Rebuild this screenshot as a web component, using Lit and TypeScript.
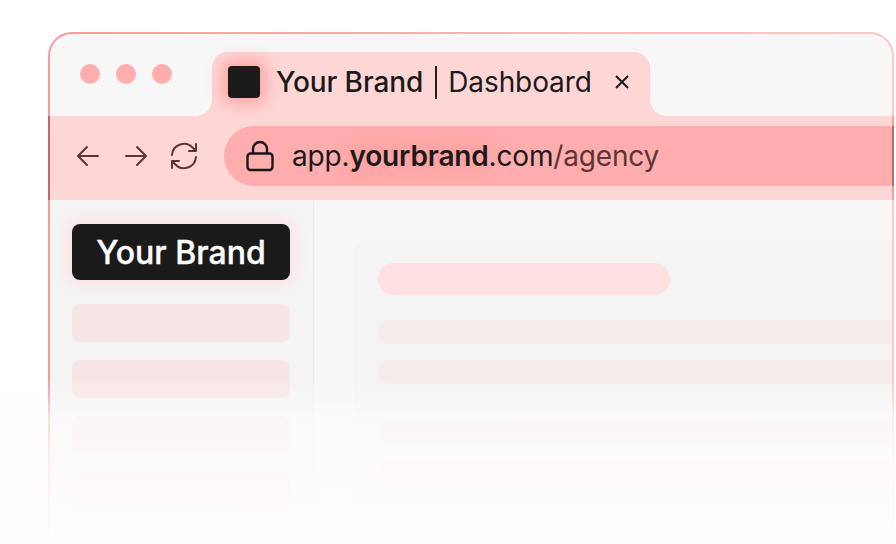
import { LitElement, html, css } from "lit";
import { customElement } from "lit/decorators.js";

@customElement("app-root")
export class AppRoot extends LitElement {
  static styles = css`
    :host {
      display: block;
      position: relative;
      width: 896px;
      height: 544px;
      overflow: hidden;
      background: #fff;
      font-family: Inter, "Liberation Sans", sans-serif;
      color: #1a1a1a;
      box-sizing: border-box;
      padding: 32px 0 0 48px;
    }
    .window {
      width: 846px;
      height: 560px;
      box-sizing: border-box;
      padding: 2px 2px 0;
      border-radius: 24px 24px 0 0;
      background: linear-gradient(90deg, #f59b9b, #ffc9c9);
      display: flex;
      flex-direction: column;
    }
    .titlebar {
      height: 82px;
      flex: none;
      display: flex;
      align-items: flex-start;
      padding-left: 30px;
      box-sizing: border-box;
      background: #f7f7f7;
      border-radius: 22px 22px 0 0;
    }
    .dots {
      display: flex;
      gap: 16px;
      margin-top: 30px;
    }
    .dots span {
      width: 20px;
      height: 20px;
      border-radius: 50%;
      background: #ffadad;
    }
    .tab {
      position: relative;
      margin: 18px 0 0 40px;
      width: 438px;
      height: 64px;
      box-sizing: border-box;
      padding: 14px 0 0 16px;
      background: #ffd6d6;
      border-radius: 16px 16px 0 0;
      display: flex;
      align-items: flex-start;
      font-size: 28px;
      line-height: 32px;
      letter-spacing: -0.1px;
      white-space: nowrap;
    }
    .tab::before,
    .tab::after {
      content: "";
      position: absolute;
      bottom: 0;
      width: 16px;
      height: 16px;
    }
    .tab::before {
      left: -16px;
      background: radial-gradient(circle at 0 0, transparent 15.5px, #ffd6d6 16px);
    }
    .tab::after {
      right: -16px;
      background: radial-gradient(circle at 100% 0, transparent 15.5px, #ffd6d6 16px);
    }
    .favicon {
      width: 32px;
      height: 32px;
      flex: none;
      border-radius: 4px;
      background: #1a1a1a;
      box-shadow: 0 0 16px 6px #ffa3a3;
      margin-right: 16px;
    }
    .brand {
      font-weight: 500;
    }
    .divider {
      width: 2px;
      height: 33px;
      background: #2a1a1a;
      margin: 0 11px 0 12px;
      flex: none;
    }
    .close {
      width: 16px;
      height: 16px;
      margin: 8px 0 0 22px;
      flex: none;
    }
    .toolbar {
      height: 84px;
      flex: none;
      margin: 0 -2px;
      padding-bottom: 4px;
      display: flex;
      align-items: center;
      box-sizing: border-box;
      background: linear-gradient(to left, #ff9a9a 2px, #ffd6d6 2px);
      border-left: 2px solid #c06a6a;
    }
    .nav {
      display: flex;
      align-items: center;
      margin-left: 26px;
      flex: none;
    }
    .nav svg {
      display: block;
      color: #5c3535;
    }
    .arrow {
      width: 24px;
      height: 24px;
    }
    .arrow + .arrow {
      margin-left: 24px;
    }
    .reload {
      width: 28px;
      height: 28px;
      margin-left: 22px;
    }
    .address {
      margin-left: 26px;
      flex: 1;
      height: 60px;
      box-sizing: border-box;
      background: #ffadad;
      border-radius: 30px 0 0 30px;
      border-right: 2px solid #b07070;
      display: flex;
      align-items: center;
      padding-left: 20px;
      font-size: 28px;
      letter-spacing: -0.006em;
      white-space: nowrap;
    }
    .lock {
      width: 32px;
      height: 32px;
      margin-right: 16px;
      flex: none;
      color: #1f1518;
    }
    .address b {
      font-weight: 600;
      text-shadow: 0 0 20px #ff8a8a;
    }
    .path {
      color: #5c3535;
    }
    .body {
      flex: 1;
      display: flex;
      min-height: 0;
      background: #f7f7f7;
    }
    .sidebar {
      width: 264px;
      flex: none;
      box-sizing: border-box;
      padding: 24px 23px 0 22px;
      background: #f4f4f4;
      border-right: 1px solid #f5eaea;
      display: flex;
      flex-direction: column;
      gap: 18px;
    }
    .logo {
      height: 56px;
      margin-bottom: 6px;
      border-radius: 8px;
      background: #1a1a1a;
      color: #fff;
      font-size: 32px;
      font-weight: 500;
      -webkit-text-stroke: 0.4px #fff;
      line-height: 58px;
      text-align: center;
      box-shadow: 0 0 16px 3px #ffdede;
    }
    .nav-item {
      height: 38px;
      border-radius: 8px;
      background: #f8e6e6;
      flex: none;
    }
    .main {
      flex: 1;
      min-width: 0;
      padding: 40px 0 0 40px;
    }
    .card {
      height: 300px;
      border-radius: 12px 0 0 12px;
      background: #f4f4f4;
      padding: 23px 0 0 24px;
      display: flex;
      flex-direction: column;
      gap: 16px;
    }
    .heading {
      width: 292px;
      height: 32px;
      border-radius: 16px;
      background: #ffe1e1;
      margin-bottom: 9px;
    }
    .line {
      height: 24px;
      border-radius: 12px 0 0 12px;
      background: #f6ecea;
      flex: none;
    }
    .line.gap {
      margin-top: 20px;
    }
    .fade {
      position: absolute;
      left: 0;
      right: 0;
      top: 380px;
      bottom: 0;
      background: linear-gradient(
        to bottom,
        rgba(255, 252, 252, 0) 0%,
        rgba(255, 252, 252, 0.68) 24%,
        rgba(255, 252, 252, 0.84) 50%,
        rgba(255, 252, 252, 0.95) 80%,
        #fffdfd 100%
      );
    }
  `;

  render() {
    return html`
      <div class="window">
        <div class="titlebar">
          <div class="dots"><span></span><span></span><span></span></div>
          <div class="tab">
            <div class="favicon"></div>
            <span class="brand">Your Brand</span>
            <div class="divider"></div>
            <span>Dashboard</span>
            <svg class="close" viewBox="0 0 16 16" fill="none" stroke="#1a1a1a" stroke-width="2">
              <path d="M2 2l12 12M14 2L2 14" />
            </svg>
          </div>
        </div>
        <div class="toolbar">
          <div class="nav">
            <svg class="arrow" viewBox="0 0 24 24" fill="none" stroke="currentColor" stroke-width="2" stroke-linecap="round" stroke-linejoin="round">
              <path d="M22 12H2M11 3l-9 9 9 9" />
            </svg>
            <svg class="arrow" viewBox="0 0 24 24" fill="none" stroke="currentColor" stroke-width="2" stroke-linecap="round" stroke-linejoin="round">
              <path d="M2 12h20M13 3l9 9-9 9" />
            </svg>
            <svg class="reload" viewBox="0 0 28 28" fill="none" stroke="currentColor" stroke-width="2" stroke-linecap="round" stroke-linejoin="round">
              <path d="M2 13a12 12 0 0 1 21-7l3 3M26 2v7h-7" />
              <path d="M26 15a12 12 0 0 1-21 7l-3-3M2 26v-7h7" />
            </svg>
          </div>
          <div class="address">
            <svg class="lock" viewBox="0 0 32 32" fill="none" stroke="currentColor" stroke-width="2.4" stroke-linejoin="round">
              <rect x="3.5" y="13.5" width="25" height="16.5" rx="3" />
              <path d="M9 13.5V9a7 7 0 0 1 14 0v4.5" />
            </svg>
            <span>app.<b>yourbrand</b>.com<span class="path">/agency</span></span>
          </div>
        </div>
        <div class="body">
          <div class="sidebar">
            <div class="logo">Your Brand</div>
            <div class="nav-item"></div>
            <div class="nav-item"></div>
            <div class="nav-item"></div>
            <div class="nav-item"></div>
          </div>
          <div class="main">
            <div class="card">
              <div class="heading"></div>
              <div class="line"></div>
              <div class="line"></div>
              <div class="line gap"></div>
              <div class="line"></div>
            </div>
          </div>
        </div>
      </div>
      <div class="fade"></div>
    `;
  }
}
